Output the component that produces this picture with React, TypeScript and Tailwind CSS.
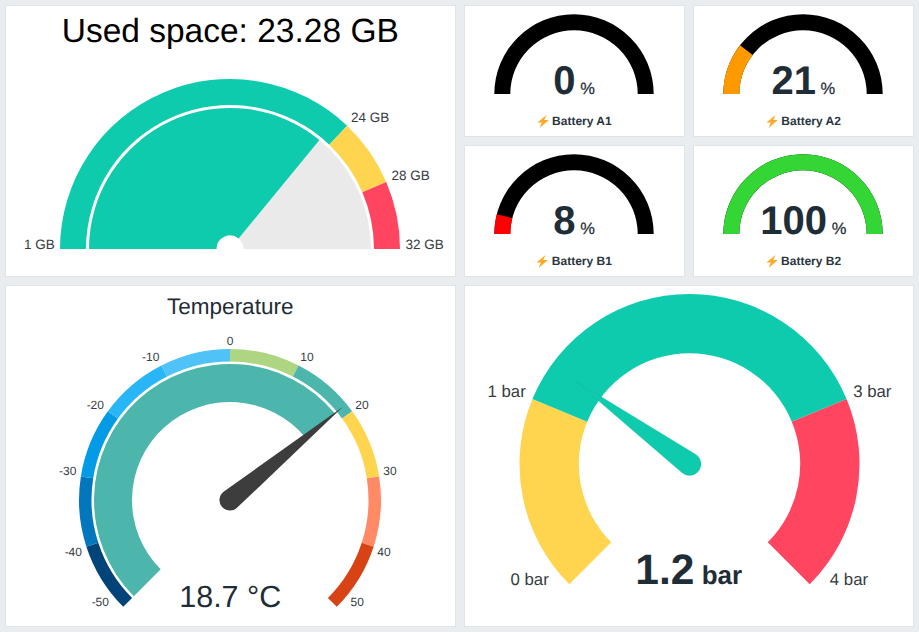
import React from "react";

const TEAL = "#0fcbae";
const YELLOW = "#ffd54f";
const RED = "#ff4560";
const LABEL = "#373d3f";

const pt = (cx: number, cy: number, r: number, deg: number): [number, number] => {
  const a = (deg * Math.PI) / 180;
  return [cx - r * Math.cos(a), cy - r * Math.sin(a)];
};

const band = (cx: number, cy: number, R: number, r: number, a0: number, a1: number) => {
  const large = a1 - a0 > 180 ? 1 : 0;
  const [x0, y0] = pt(cx, cy, R, a0);
  const [x1, y1] = pt(cx, cy, R, a1);
  const [x2, y2] = pt(cx, cy, r, a1);
  const [x3, y3] = pt(cx, cy, r, a0);
  return `M${x0} ${y0}A${R} ${R} 0 ${large} 1 ${x1} ${y1}L${x2} ${y2}A${r} ${r} 0 ${large} 0 ${x3} ${y3}Z`;
};

const needle = (cx: number, cy: number, r: number, len: number, deg: number) => {
  const [tx, ty] = pt(cx, cy, len, deg);
  const off = (Math.acos(r / len) * 180) / Math.PI;
  const [x1, y1] = pt(cx, cy, r, deg + off);
  const [x2, y2] = pt(cx, cy, r, deg - off);
  return `M${tx} ${ty}L${x1} ${y1}A${r} ${r} 0 1 1 ${x2} ${y2}Z`;
};

function Label({ x, y, size, anchor = "start", children }: { x: number; y: number; size: number; anchor?: "start" | "middle" | "end"; children: React.ReactNode }) {
  return (
    <text x={x} y={y} fontSize={size} fill={LABEL} textAnchor={anchor}>
      {children}
    </text>
  );
}

function UsedSpace() {
  const c: [number, number] = [230, 249];
  const span = (v: number) => ((v - 1) / 31) * 180;
  return (
    <div className="bg-white border border-[#dfe4e8] flex flex-col min-w-0">
      <div className="text-center text-[33.5px] leading-10 text-black pt-[6px]">Used space: 23.28 GB</div>
      <svg viewBox="6 52 449 222" width={449} height={222} className="block">
        <path d={band(c[0], c[1], 170, 144, 0, span(24))} fill={TEAL} />
        <path d={band(c[0], c[1], 170, 144, span(24), span(28))} fill={YELLOW} />
        <path d={band(c[0], c[1], 170, 144, span(28), 180)} fill={RED} />
        <path d={band(c[0], c[1], 141, 13.5, 0, 180)} fill="#eaeaea" />
        <path d={band(c[0], c[1], 141, 13.5, 0, span(23.28))} fill={TEAL} />
        <Label x={24} y={249} size={13.5}>1 GB</Label>
        <Label x={351} y={122} size={13.5}>24 GB</Label>
        <Label x={391.5} y={180} size={13.5}>28 GB</Label>
        <Label x={405.5} y={249} size={13.5}>32 GB</Label>
      </svg>
    </div>
  );
}

function Battery({ name, value, color }: { name: string; value: number; color: string }) {
  const a = (value / 100) * 180;
  return (
    <div className="bg-white border border-[#dfe4e8] flex flex-col items-center pt-2 min-w-0">
      <div className="relative w-40 h-20">
        <svg viewBox="0 0 160 80" width={160} height={80} className="block">
          <path d={band(80, 80, 79.7, 63.7, 0, 180)} fill="#000000" />
          {value > 0 && <path d={band(80, 80, 79.7, 63.7, 0, a)} fill={color} />}
        </svg>
        <div className="absolute left-0 right-0 top-[46.6px] text-center text-[40px] leading-none font-bold text-[#1f2d37] whitespace-pre">
          {value}
          <span className="text-[16.5px] font-normal text-[#1f2d37] [-webkit-text-stroke:0.25px_#1f2d37]"> %</span>
        </div>
      </div>
      <div className="flex items-center gap-[3.5px] mt-[19.5px] text-xs font-bold leading-[15px] text-[#2b3640]">
        <svg viewBox="0 0 12 13" width={12} height={13} className="block shrink-0">
          <path d="M9.6 0 L0.4 7.4 H4.8 L2.6 13 L11.8 5 H7.2 Z" fill="#ffa726" />
        </svg>
        <span>{name}</span>
      </div>
    </div>
  );
}

function Temperature() {
  const c: [number, number] = [230, 500];
  const ang = (v: number) => -45 + ((v + 50) / 100) * 270;
  const segs: [number, number, string][] = [
    [-50, -40, "#01447a"],
    [-40, -30, "#0277bd"],
    [-30, -20, "#039be5"],
    [-20, -10, "#29b6f6"],
    [-10, 0, "#4fc3f7"],
    [0, 10, "#aed581"],
    [10, 20, "#4db6ac"],
    [20, 30, "#ffd54f"],
    [30, 40, "#ff8a65"],
    [40, 50, "#d84315"],
  ];
  const ticks: [string, number, number][] = [
    ["-50", 100.3, 606],
    ["-40", 73.3, 556],
    ["-30", 67.7, 475],
    ["-20", 95.3, 408.5],
    ["-10", 150.7, 361],
    ["0", 230, 344.5],
    ["10", 307, 361],
    ["20", 362, 408.5],
    ["30", 390, 475],
    ["40", 384, 556],
    ["50", 357.3, 606],
  ];
  return (
    <div className="relative bg-white border border-[#dfe4e8] flex flex-col min-w-0">
      <div className="text-center text-[22.5px] leading-[26px] text-[#1f2d37] pt-2">Temperature</div>
      <svg viewBox="6 320 449 306" width={449} height={306} className="block">
        {segs.map(([a, b, col]) => (
          <path key={a} d={band(c[0], c[1], 151, 138.5, ang(a), ang(b))} fill={col} />
        ))}
        <path d={band(c[0], c[1], 136, 98, ang(-50), ang(18.7))} fill="#4db6ac" />
        <path d={needle(c[0], c[1], 10.5, 146, ang(18.7))} fill="#3d3d3d" />
        {ticks.map(([t, x, y]) => (
          <Label key={t} x={x} y={y} size={12} anchor="middle">{t}</Label>
        ))}
      </svg>
      <div className="absolute left-0 right-0 top-[296px] text-center text-[30.5px] leading-none text-[#1f2d37]">18.7 °C</div>
    </div>
  );
}

function Pressure() {
  const c: [number, number] = [689, 464];
  const ang = (v: number) => -45 + (v / 4) * 270;
  return (
    <div className="relative bg-white border border-[#dfe4e8] min-w-0">
      <svg viewBox="464.5 286 448.5 340" width={448.5} height={340} className="block">
        <path d={band(c[0], c[1], 170, 110.7, ang(0), ang(1))} fill={YELLOW} />
        <path d={band(c[0], c[1], 170, 110.7, ang(1), ang(3))} fill={TEAL} />
        <path d={band(c[0], c[1], 170, 110.7, ang(3), ang(4))} fill={RED} />
        <path d={needle(c[0], c[1], 11.5, 141, ang(1.2))} fill={TEAL} stroke="#0b9c86" strokeOpacity={0.45} strokeWidth={0.4} />
        <Label x={487} y={397} size={16.8}>1 bar</Label>
        <Label x={852.7} y={397} size={16.8}>3 bar</Label>
        <Label x={510} y={585} size={16.8}>0 bar</Label>
        <Label x={829.3} y={585} size={16.8}>4 bar</Label>
      </svg>
      <div className="absolute left-0 right-0 top-[263.5px] text-center text-[42.5px] leading-none font-bold text-[#1f2d37] whitespace-pre">
        1.2<span className="text-[26px]"> bar</span>
      </div>
    </div>
  );
}

export default function App() {
  return (
    <div className="w-full min-h-screen bg-[#e9edf0] p-[5px] grid grid-cols-2 grid-rows-[272px_342px] gap-2 [text-rendering:geometricPrecision] [font-family:'Liberation_Sans',Arial,sans-serif]">
      <UsedSpace />
      <div className="grid grid-cols-2 grid-rows-2 gap-2 min-w-0">
        <Battery name="Battery A1" value={0} color="#000000" />
        <Battery name="Battery A2" value={21} color="#ff9900" />
        <Battery name="Battery B1" value={8} color="#ff0000" />
        <Battery name="Battery B2" value={100} color="#33d634" />
      </div>
      <Temperature />
      <Pressure />
    </div>
  );
}
